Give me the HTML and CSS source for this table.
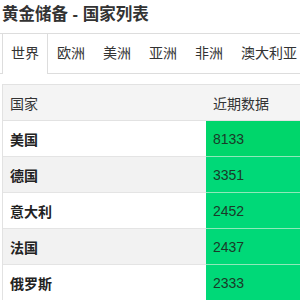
FILE: index.html
```html
<!DOCTYPE html>
<html lang="zh">
<head>
<meta charset="utf-8">
<link rel="stylesheet" href="styles.css">
</head>
<body>
<div class="page">
  <h1 class="title">黄金储备 - 国家列表</h1>
  <ul class="tabs">
    <li class="tab active">世界</li>
    <li class="tab">欧洲</li>
    <li class="tab">美洲</li>
    <li class="tab">亚洲</li>
    <li class="tab">非洲</li>
    <li class="tab">澳大利亚</li>
  </ul>
  <div class="table-wrap">
    <table class="data">
      <thead>
        <tr><th class="c1">国家</th><th class="c2">近期数据</th></tr>
      </thead>
      <tbody>
        <tr><td class="name">美国</td><td class="val v1">8133</td></tr>
        <tr class="alt"><td class="name">德国</td><td class="val">3351</td></tr>
        <tr><td class="name">意大利</td><td class="val">2452</td></tr>
        <tr class="alt"><td class="name">法国</td><td class="val">2437</td></tr>
        <tr><td class="name">俄罗斯</td><td class="val">2333</td></tr>
      </tbody>
    </table>
  </div>
</div>
</body>
</html>
```
FILE: styles.css
```css
html, body {
  margin: 0;
  padding: 0;
  background: #fff;
  overflow: hidden;
}
body {
  font-family: "Liberation Sans", "Noto Sans CJK SC", sans-serif;
  color: #333;
  width: 300px;
  height: 300px;
}
.page {
  display: flex;
  flex-direction: column;
  overflow: hidden;
  width: 300px;
}
.title {
  margin: 0;
  height: 33px;
  padding-left: 2px;
  font-size: 16.5px;
  font-weight: bold;
  line-height: 29px;
  color: #333;
  white-space: nowrap;
}
.tabs {
  list-style: none;
  margin: 0;
  padding: 0 0 0 2px;
  display: flex;
  align-items: flex-start;
  border-top: 1px solid #ddd;
  border-bottom: 1px solid #ddd;
  height: 39px;
  white-space: nowrap;
}
.tab {
  padding: 0 9px;
  font-size: 14px;
  line-height: 39px;
  color: #333;
  flex: none;
  width: 28px;
  text-align: center;
  box-sizing: content-box;
}
.tab:last-child { width: auto; }
.tab.active {
  border-left: 1px solid #ddd;
  border-right: 1px solid #ddd;
  background: #fff;
  height: 40px;
  padding: 0 8px;
  position: relative;
}
.table-wrap {
  margin-top: 10px;
  padding-left: 2px;
  overflow: hidden;
}
.data {
  border-collapse: collapse;
  width: calc(100% + 30px);
  font-size: 14px;
}
.data th, .data td {
  padding: 0 0 0 7px;
  height: 35px;
  text-align: left;
  white-space: nowrap;
}
.data thead th {
  background: #f4f4f4;
  font-weight: normal;
  color: #333;
  border-top: 1px solid #e2e2e2;
  border-bottom: 1px solid #e2e2e2;
}
.data th.c1 { border-left: 1px solid #e2e2e2; }
.c1 { width: 196px; }
.data td {
  border-top: 1px solid #e4e4e4;
}
.data td.name {
  font-weight: bold;
  color: #222;
  border-left: 1px solid #e2e2e2;
}
.data tr.alt td.name { background: #f2f2f2; }
.data td.val {
  background: #00d978;
  color: #1a3a28;
  border-top: 1px solid #8fe8b9;
}
.data td.val.v1 { background: #00d66b; }
```
